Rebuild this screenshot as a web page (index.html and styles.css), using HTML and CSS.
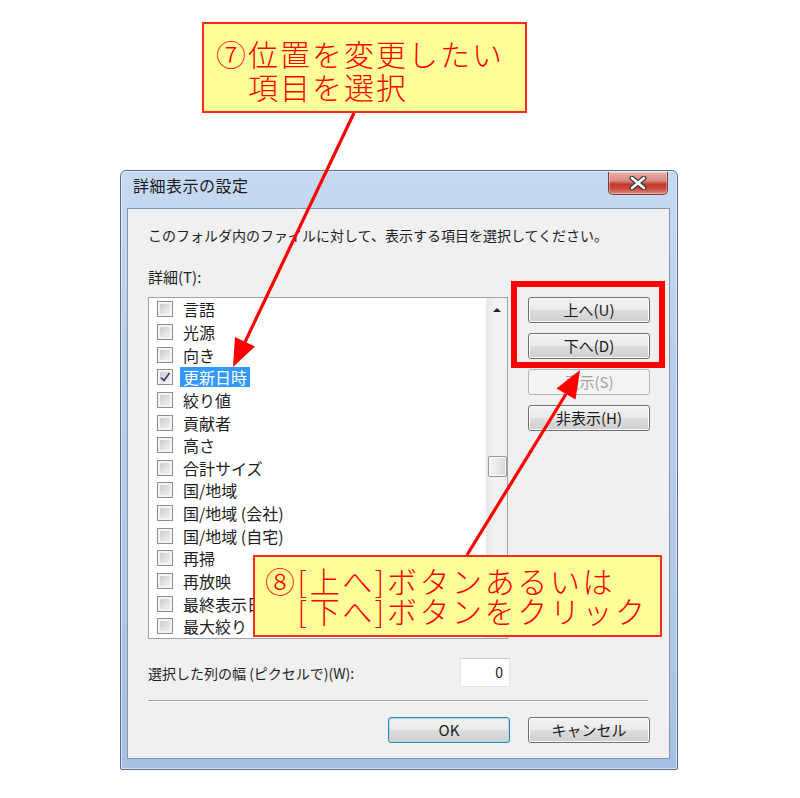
FILE: index.html
```html
<!DOCTYPE html>
<html lang="ja">
<head>
<meta charset="utf-8">
<title>詳細表示の設定</title>
<link rel="stylesheet" href="styles.css">
</head>
<body>
<div class="page">
  <div class="dialog">
    <div class="titlebar">
      <span class="title">詳細表示の設定</span>
      <div class="close">
        <svg width="18" height="14" viewBox="0 0 18 14">
          <path d="M3 2 L15 12 M15 2 L3 12" stroke="#3b3b3b" stroke-width="5" stroke-linecap="round"/>
          <path d="M3 2 L15 12 M15 2 L3 12" stroke="#ffffff" stroke-width="2.6" stroke-linecap="round"/>
        </svg>
      </div>
    </div>
    <div class="client">
      <div class="content">
        <p class="instr">このフォルダ内のファイルに対して、表示する項目を選択してください。</p>
        <p class="label">詳細(T):</p>
        <div class="main">
          <div class="listbox">
            <div class="items">
              <div class="item"><span class="cb"></span><span class="txt">言語</span></div>
              <div class="item"><span class="cb"></span><span class="txt">光源</span></div>
              <div class="item"><span class="cb"></span><span class="txt">向き</span></div>
              <div class="item"><span class="cb checked"><svg width="14" height="14" viewBox="0 0 14 14"><path d="M3 7.5 L6 10.5 L11.5 3" fill="none" stroke="#2b3a67" stroke-width="1.6"/></svg></span><span class="txt sel">更新日時</span></div>
              <div class="item"><span class="cb"></span><span class="txt">絞り値</span></div>
              <div class="item"><span class="cb"></span><span class="txt">貢献者</span></div>
              <div class="item"><span class="cb"></span><span class="txt">高さ</span></div>
              <div class="item"><span class="cb"></span><span class="txt">合計サイズ</span></div>
              <div class="item"><span class="cb"></span><span class="txt">国/地域</span></div>
              <div class="item"><span class="cb"></span><span class="txt">国/地域 (会社)</span></div>
              <div class="item"><span class="cb"></span><span class="txt">国/地域 (自宅)</span></div>
              <div class="item"><span class="cb"></span><span class="txt">再掃</span></div>
              <div class="item"><span class="cb"></span><span class="txt">再放映</span></div>
              <div class="item"><span class="cb"></span><span class="txt">最終表示日</span></div>
              <div class="item"><span class="cb"></span><span class="txt">最大絞り</span></div>
            </div>
            <div class="scrollbar">
              <div class="arrow-up"></div>
              <div class="thumb"></div>
            </div>
          </div>
          <div class="side-buttons">
            <div class="btn">上へ(U)</div>
            <div class="btn">下へ(D)</div>
            <div class="btn disabled">表示(S)</div>
            <div class="btn">非表示(H)</div>
          </div>
        </div>
        <div class="width-row">
          <span class="wlabel">選択した列の幅 (ピクセルで)(W):</span>
          <div class="num">0</div>
        </div>
        <div class="sep"></div>
        <div class="footer">
          <div class="btn default">OK</div>
          <div class="btn">キャンセル</div>
        </div>
      </div>
    </div>
  </div>

  <div class="redbox"></div>

  <svg class="arrows" width="800" height="798" viewBox="0 0 800 798">
    <line x1="354" y1="113" x2="245" y2="342" stroke="#ff0000" stroke-width="3.2"/>
    <polygon points="233,367 255,346.4 235,337" fill="#ff0000"/>
    <line x1="467" y1="555" x2="566" y2="394" stroke="#ff0000" stroke-width="3.2"/>
    <polygon points="580,370 575.5,399.6 556.5,388.4" fill="#ff0000"/>
  </svg>

  <div class="callout top-callout">
    <div>⑦位置を変更したい</div>
    <div>　項目を選択</div>
  </div>
  <div class="callout bottom-callout">
    <div>⑧[上へ]ボタンあるいは</div>
    <div>　[下へ]ボタンをクリック</div>
  </div>
</div>
</body>
</html>
```
FILE: styles.css
```css
* { box-sizing: border-box; }
html, body { margin: 0; padding: 0; background: #ffffff; }
body { font-family: "Noto Sans CJK JP", "Noto Sans", sans-serif; }
p { margin: 0; }

.page {
  position: relative;
  width: 800px;
  height: 798px;
  overflow: hidden;
  background: #ffffff;
  padding-top: 170px;
  padding-left: 120px;
}

.dialog {
  width: 558px;
  height: 600px;
  border: 1px solid #556c8c;
  border-radius: 6px 6px 2px 2px;
  background: linear-gradient(180deg, #c6daf2 0%, #b8cfec 30%, #b0c8e8 70%, #a6c0e3 100%);
  padding: 0 7px 10px 6px;
  display: flex;
  flex-direction: column;
  box-shadow: inset 0 0 0 1px rgba(255,255,255,0.55);
}

.titlebar {
  height: 37px;
  display: flex;
  justify-content: space-between;
  align-items: flex-start;
  padding-left: 6px;
}
.title {
  font-size: 16px;
  line-height: 28px;
  color: #1a1a1a;
  letter-spacing: 0.5px;
}
.close {
  width: 60px;
  height: 23px;
  margin-top: 1px;
  margin-right: 2px;
  border: 1px solid #7a3b35;
  border-top: none;
  border-radius: 0 0 5px 5px;
  background: linear-gradient(180deg, #eab3aa 0%, #d98a7f 40%, #c0392b 55%, #c9483a 75%, #dd8a7e 100%);
  display: flex;
  align-items: center;
  justify-content: center;
  box-shadow: inset 0 0 0 1px rgba(255,255,255,0.35);
}

.client {
  flex: 1;
  border: 1px solid #8797ad;
  background: #f0f0f0;
}

.content {
  width: 522px;
  padding-left: 20px;
  color: #1e1e1e;
}

.instr {
  margin-top: 16px;
  font-size: 14px;
  line-height: 20px;
}
.label {
  margin-top: 22px;
  font-size: 15px;
  line-height: 20px;
}

.main {
  margin-top: 10px;
  display: flex;
  gap: 20px;
}

.listbox {
  width: 360px;
  height: 342px;
  border: 1px solid #9ea4ab;
  background: #ffffff;
  display: flex;
}
.items {
  flex: 1;
  overflow: hidden;
}
.item {
  height: 22.65px;
  display: flex;
  align-items: center;
  padding-left: 8px;
}
.cb {
  width: 16px;
  height: 16px;
  flex: none;
  border: 1px solid #8e8f8f;
  background: linear-gradient(135deg, #c4c4c4 0%, #e2e2e2 55%, #f6f6f6 100%);
  box-shadow: inset 0 0 0 2px #f4f4f4;
  margin-right: 7px;
  display: flex;
  align-items: center;
  justify-content: center;
}
.txt {
  font-size: 16px;
  line-height: 20px;
  padding: 0 3px;
  color: #1e1e1e;
  white-space: nowrap;
}
.txt.sel {
  background: #3399ff;
  color: #ffffff;
}

.scrollbar {
  width: 21px;
  background: linear-gradient(90deg, #e6e6e6 0%, #f3f3f3 40%, #f0f0f0 100%);
  border-left: 1px solid #ececec;
  display: flex;
  flex-direction: column;
  align-items: center;
}
.arrow-up {
  width: 0;
  height: 0;
  margin-top: 10px;
  border-left: 4px solid transparent;
  border-right: 4px solid transparent;
  border-bottom: 4px solid #222;
}
.thumb {
  margin-top: 144px;
  width: 19px;
  height: 21px;
  border: 1px solid #979797;
  border-radius: 2px;
  background: linear-gradient(90deg, #f4f4f4 0%, #e9e9e9 50%, #d6d6d6 100%);
  box-shadow: inset 0 0 0 1px #fafafa;
}

.side-buttons {
  width: 122px;
  display: flex;
  flex-direction: column;
  gap: 10px;
}

.btn {
  width: 122px;
  height: 26px;
  border: 1px solid #707070;
  border-radius: 3px;
  background: linear-gradient(180deg, #f2f2f2 0%, #ebebeb 48%, #dddddd 52%, #cfcfcf 100%);
  box-shadow: inset 0 0 0 1px #fbfbfb;
  font-size: 15px;
  line-height: 24px;
  text-align: center;
  color: #1a1a1a;
}
.btn.disabled {
  border-color: #b4b4b4;
  background: #f4f4f4;
  color: #a3a3a3;
  box-shadow: none;
}
.btn.default {
  border-color: #3c7fb1;
  box-shadow: inset 0 0 0 1px #a6dcf6;
}

.width-row {
  margin-top: 19px;
  width: 362px;
  display: flex;
  justify-content: space-between;
  align-items: center;
}
.wlabel {
  font-size: 14px;
  line-height: 20px;
}
.num {
  width: 50px;
  height: 29px;
  background: #ffffff;
  border: 1px solid #e2e6ea;
  border-top-color: #c9ccd1;
  font-size: 14px;
  line-height: 27px;
  text-align: right;
  padding-right: 6px;
}

.sep {
  margin-top: 13px;
  width: 500px;
  height: 2px;
  border-top: 1px solid #a9a9a9;
  border-bottom: 1px solid #ffffff;
}

.footer {
  margin-top: 15px;
  display: flex;
  justify-content: flex-end;
  gap: 18px;
}

.redbox {
  position: absolute;
  left: 511px;
  top: 281px;
  width: 154px;
  height: 87px;
  border: 6px solid #ff0000;
}

.arrows {
  position: absolute;
  left: 0;
  top: 0;
  pointer-events: none;
}

.callout {
  position: absolute;
  background: #ffff99;
  border: 2px solid #ff2a1a;
  color: #ff0000;
  font-size: 30px;
  font-weight: 300;
  letter-spacing: 2px;
  white-space: nowrap;
}
.top-callout {
  left: 202px;
  top: 22px;
  width: 325px;
  height: 91px;
  padding: 13px 0 0 12px;
  line-height: 33px;
}
.bottom-callout {
  left: 253px;
  top: 555px;
  width: 409px;
  height: 82px;
  padding: 8px 0 0 10px;
  line-height: 30px;
  letter-spacing: 2.6px;
}
```
